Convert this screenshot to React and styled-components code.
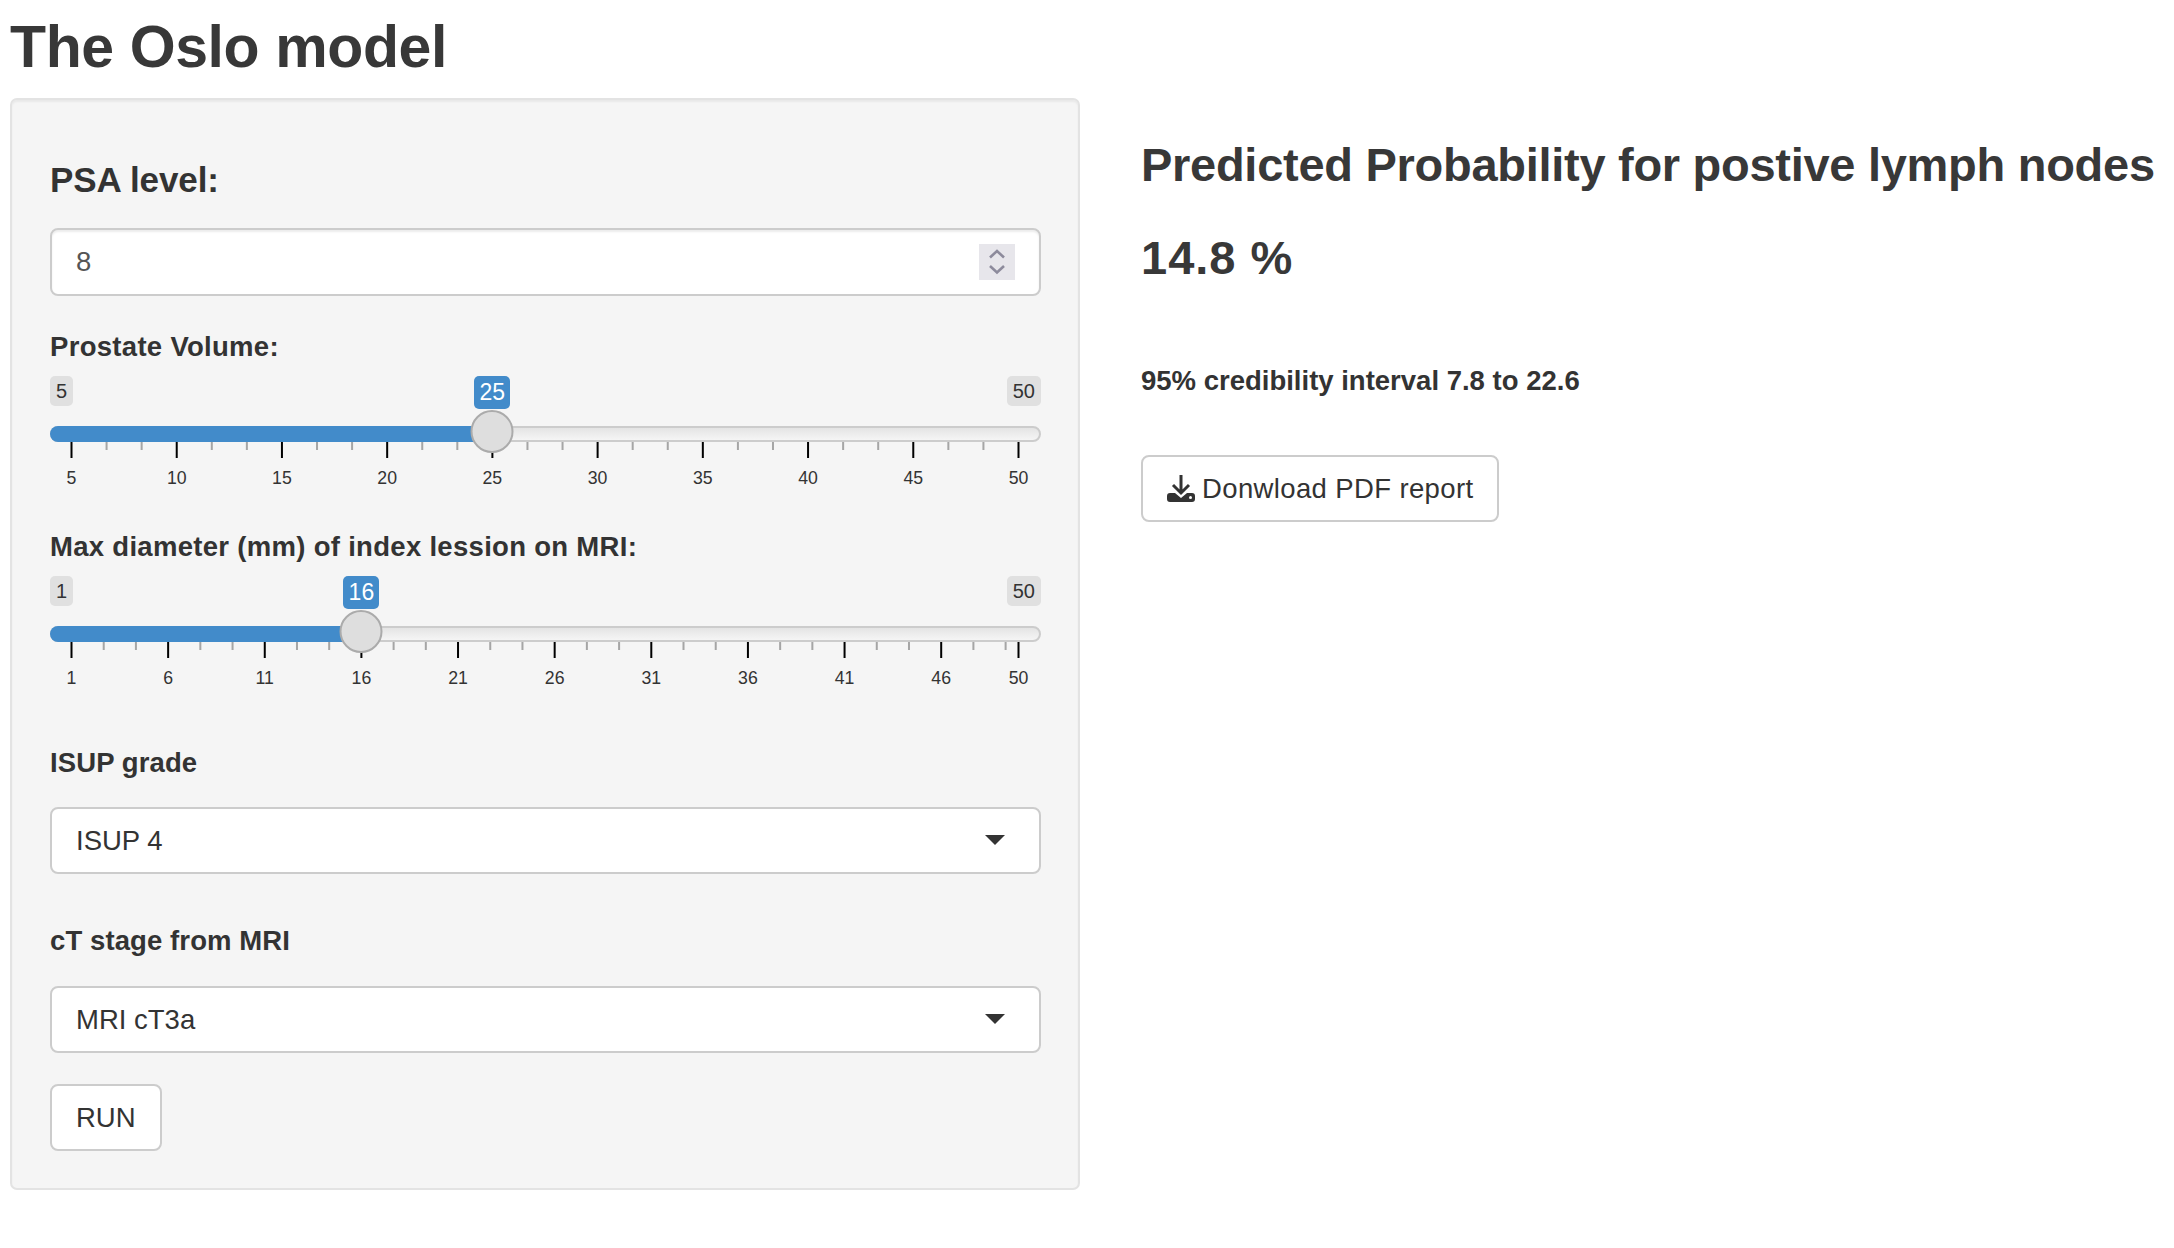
import React from "react";
import styled, { createGlobalStyle } from "styled-components";

const Global = createGlobalStyle`
  html, body { margin: 0; padding: 0; background: #fff; }
  body { font-family: "Liberation Sans", Arial, sans-serif; color: #333; }
`;
const Page = styled.div`
  padding-left: 10px;
  width: 2164px;
  box-sizing: border-box;
`;
const Title = styled.h2`
  margin: 0;
  height: 98px;
  line-height: 94px;
  font-size: 59px;
  font-weight: 700;
  letter-spacing: -0.4px;
  color: #383838;
`;
const Columns = styled.div`
  display: flex;
  align-items: flex-start;
  gap: 61px;
`;
const Panel = styled.div`
  box-sizing: border-box;
  flex: 0 0 1070px;
  height: 1092px;
  padding: 60px 37px 38px 38px;
  background: #f5f5f5;
  border: 2px solid #e3e3e3;
  border-radius: 7px;
  box-shadow: inset 0 2px 2px rgba(0, 0, 0, 0.05);
`;
const HeadingLabel = styled.div`
  height: 40px;
  line-height: 40px;
  font-size: 35px;
  font-weight: 700;
  letter-spacing: -0.1px;
`;
const FieldLabel = styled.div`
  height: 32px;
  line-height: 32px;
  font-size: 27.5px;
  font-weight: 700;
  margin-top: ${(p) => p.$top}px;
  letter-spacing: ${(p) => p.$spacing || 0}px;
`;
const Control = styled.div`
  box-sizing: border-box;
  display: flex;
  align-items: center;
  justify-content: space-between;
  height: ${(p) => p.$height || 67}px;
  margin-top: ${(p) => p.$top}px;
  padding: 0 24px;
  background: #fff;
  border: 2px solid #ccc;
  border-radius: 8px;
  font-size: 27.5px;
  color: ${(p) => p.$color || "#333"};
  box-shadow: ${(p) => (p.$inset ? "inset 0 2px 2px rgba(0,0,0,.075)" : "none")};
`;
const Spinner = styled.svg`
  width: 36px;
  height: 36px;
  background: #e7e6eb;
`;
const Caret = styled.span`
  margin-right: 10px;
  margin-top: -2px;
  width: 0;
  height: 0;
  border-style: solid;
  border-width: 10px 10px 0;
  border-color: #333 transparent transparent;
`;
const Slider = styled.div`
  position: relative;
  display: flex;
  flex-direction: column;
  margin-top: ${(p) => p.$top}px;
`;
const TagRow = styled.div`
  display: flex;
  justify-content: space-between;
  margin-bottom: 20px;
`;
const Tag = styled.span`
  height: 30px;
  line-height: 30px;
  padding: 0 6px;
  border-radius: 5px;
  background: #e0e0e0;
  color: #333;
  font-size: 20px;
`;
const ValueTag = styled.span`
  position: absolute;
  top: 0;
  height: 33px;
  line-height: 33px;
  width: 36px;
  text-align: center;
  transform: translateX(-50%);
  border-radius: 5px;
  background: #428bca;
  color: #fff;
  font-size: 23px;
`;
const Track = styled.div`
  position: relative;
  height: 16px;
  box-sizing: border-box;
  border: 2px solid #ccc;
  border-radius: 8px;
  background: linear-gradient(#e4e4e4, #f5f5f5);
`;
const Fill = styled.div`
  position: absolute;
  top: -2px;
  left: -2px;
  height: 16px;
  border-radius: 8px 0 0 8px;
  background: #428bca;
`;
const Handle = styled.div`
  position: absolute;
  top: -18px;
  width: 43px;
  height: 43px;
  box-sizing: border-box;
  transform: translateX(-50%);
  border: 2px solid #ababab;
  border-radius: 50%;
  background: #dedede;
`;
const Scale = styled.svg`
  display: block;
  width: 100%;
  height: 48px;
  text {
    font-family: "Liberation Sans", Arial, sans-serif;
    font-size: 17.7px;
    fill: #333;
    text-anchor: middle;
  }
`;
const RunButton = styled.button`
  display: block;
  box-sizing: border-box;
  height: 67px;
  margin-top: 31px;
  padding: 0 24px;
  background: #fff;
  border: 2px solid #ccc;
  border-radius: 8px;
  font: 27.5px "Liberation Sans", Arial, sans-serif;
  color: #333;
`;
const Results = styled.div`
  display: flex;
  flex-direction: column;
  align-items: flex-start;
`;
const ResultTitle = styled.h3`
  margin: 44px 0 0;
  height: 46px;
  line-height: 46px;
  font-size: 47px;
  font-weight: 700;
  white-space: nowrap;
  color: #383838;
  letter-spacing: ${(p) => p.$spacing}px;
`;
const ResultValue = styled(ResultTitle)`
  margin-top: 47px;
`;
const Interval = styled.div`
  margin-top: 84px;
  height: 32px;
  line-height: 32px;
  font-size: 27.5px;
  font-weight: 700;
`;
const DownloadButton = styled.button`
  display: flex;
  align-items: center;
  gap: 7px;
  box-sizing: border-box;
  height: 67px;
  margin-top: 58px;
  padding: 0 24px 0 24px;
  background: #fff;
  border: 2px solid #ccc;
  border-radius: 8px;
  font: 27.5px "Liberation Sans", Arial, sans-serif;
  letter-spacing: 0.37px;
  color: #333;
`;

const X0 = 21.5;
const GRID = 947;
const WIDTH = 991;

function RangeSlider({ min, max, value, step, top }) {
  const pos = (v) => X0 + ((v - min) / (max - min)) * GRID;
  const majors = [];
  for (let v = min; v < max; v += step) majors.push(v);
  if (majors[majors.length - 1] !== max) majors.push(max);
  const minors = [];
  for (let v = min; v < max; v += step) {
    [1, 2].forEach((i) => {
      const m = v + (step * i) / 3;
      if (m < max) minors.push(m);
    });
  }
  return (
    <Slider $top={top}>
      <TagRow>
        <Tag>{min}</Tag>
        <Tag>{max}</Tag>
      </TagRow>
      <ValueTag style={{ left: pos(value) }}>{value}</ValueTag>
      <Track>
        <Fill style={{ width: pos(value) }} />
        <Handle style={{ left: pos(value) - 2 }} />
      </Track>
      <Scale viewBox={`0 0 ${WIDTH} 48`}>
        {minors.map((m) => (
          <rect key={m} x={pos(m) - 1} y="0" width="2" height="8" fill="#a5a5a5" />
        ))}
        {majors.map((m) => (
          <rect key={m} x={pos(m) - 1} y="0" width="2" height="16" fill="#000" />
        ))}
        {majors.map((m) => (
          <text key={m} x={pos(m)} y="42">
            {m}
          </text>
        ))}
      </Scale>
    </Slider>
  );
}

export default function App() {
  return (
    <Page>
      <Global />
      <Title>The Oslo model</Title>
      <Columns>
        <Panel>
          <HeadingLabel>PSA level:</HeadingLabel>
          <Control $top={28} $height={68} $color="#555" $inset>
            8
            <Spinner viewBox="0 0 36 36" fill="none" stroke="#8d8b9c" strokeWidth="2.6">
              <path d="M11 13.5l7-6.5 7 6.5M11 22l7 6.5 7-6.5" />
            </Spinner>
          </Control>
          <FieldLabel $top={35} $spacing={0.3}>Prostate Volume:</FieldLabel>
          <RangeSlider min={5} max={50} value={25} step={5} top={13} />
          <FieldLabel $top={41} $spacing={0.3}>Max diameter (mm) of index lession on MRI:</FieldLabel>
          <RangeSlider min={1} max={50} value={16} step={5} top={13} />
          <FieldLabel $top={57} $spacing={0.1}>ISUP grade</FieldLabel>
          <Control $top={28}>
            ISUP 4
            <Caret />
          </Control>
          <FieldLabel $top={51} $spacing={0.1}>cT stage from MRI</FieldLabel>
          <Control $top={29}>
            MRI cT3a
            <Caret />
          </Control>
          <RunButton>RUN</RunButton>
        </Panel>
        <Results>
          <ResultTitle $spacing={-0.28}>Predicted Probability for postive lymph nodes</ResultTitle>
          <ResultValue $spacing={1}>14.8 %</ResultValue>
          <Interval>95% credibility interval 7.8 to 22.6</Interval>
          <DownloadButton>
            <svg width="28" height="27" viewBox="0 0 28 27" aria-hidden="true">
              <path d="M14 0v17M6 10l8 8 8-8" fill="none" stroke="#333" strokeWidth="3" />
              <path d="M3 18h5l6 5 6-5h5a3 3 0 0 1 3 3v3a3 3 0 0 1-3 3H3a3 3 0 0 1-3-3v-3a3 3 0 0 1 3-3z" fill="#333" />
              <circle cx="23.5" cy="22.5" r="1.5" fill="#fff" />
            </svg>
            Donwload PDF report
          </DownloadButton>
        </Results>
      </Columns>
    </Page>
  );
}
